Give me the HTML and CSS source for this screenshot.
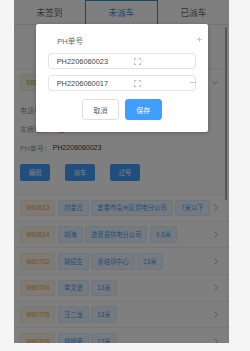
FILE: index.html
```html
<!DOCTYPE html>
<html lang="zh">
<head>
<meta charset="utf-8">
<title>派车</title>
<link rel="stylesheet" href="styles.css">
</head>
<body>
<div class="phone">
  <div class="tabs">
    <div class="tab">未签到</div>
    <div class="tab active">未派车</div>
    <div class="tab">已派车</div>
  </div>

  <div class="filter">
    <div class="search"></div>
  </div>

  <div class="item open">
    <div class="item-head">
      <span class="tag green">S60615</span>
      <svg class="chev-down" width="6" height="4" viewBox="0 0 6 4"><polyline points="0.5,0.5 3,3 5.5,0.5" fill="none" stroke="#999" stroke-width="0.8"/></svg>
    </div>
    <div class="detail">
      <div class="line"><span class="lbl">电话号码：</span><span class="val">13870612345</span></div>
      <div class="line"><span class="lbl">车牌号码：</span><span class="val">赣AF5088</span></div>
      <div class="line"><span class="lbl">PH单号：</span><span class="val">PH2206060023</span></div>
      <div class="actions">
        <button class="act">编辑</button>
        <button class="act">派车</button>
        <button class="act">过号</button>
      </div>
    </div>
  </div>

  <div class="item">
    <span class="tag orange">W60613</span>
    <span class="tag blue">刘金元</span>
    <span class="tag blue">宜春市袁州区供电分公司</span>
    <span class="tag blue">7米以下</span>
    <svg class="chev" width="4" height="7" viewBox="0 0 4 7"><polyline points="0.5,0.5 3.3,3.5 0.5,6.5" fill="none" stroke="#999" stroke-width="0.8"/></svg>
  </div>
  <div class="item">
    <span class="tag orange">W60614</span>
    <span class="tag blue">胡海</span>
    <span class="tag blue">进贤县供电分公司</span>
    <span class="tag blue">9.6米</span>
    <svg class="chev" width="4" height="7" viewBox="0 0 4 7"><polyline points="0.5,0.5 3.3,3.5 0.5,6.5" fill="none" stroke="#999" stroke-width="0.8"/></svg>
  </div>
  <div class="item">
    <span class="tag orange">W60702</span>
    <span class="tag blue">胡绍生</span>
    <span class="tag blue">省培训中心</span>
    <span class="tag blue">13米</span>
    <svg class="chev" width="4" height="7" viewBox="0 0 4 7"><polyline points="0.5,0.5 3.3,3.5 0.5,6.5" fill="none" stroke="#999" stroke-width="0.8"/></svg>
  </div>
  <div class="item">
    <span class="tag orange">W60704</span>
    <span class="tag blue">单文进</span>
    <span class="tag blue">13米</span>
    <svg class="chev" width="4" height="7" viewBox="0 0 4 7"><polyline points="0.5,0.5 3.3,3.5 0.5,6.5" fill="none" stroke="#999" stroke-width="0.8"/></svg>
  </div>
  <div class="item">
    <span class="tag orange">W60705</span>
    <span class="tag blue">汪二龙</span>
    <span class="tag blue">13米</span>
    <svg class="chev" width="4" height="7" viewBox="0 0 4 7"><polyline points="0.5,0.5 3.3,3.5 0.5,6.5" fill="none" stroke="#999" stroke-width="0.8"/></svg>
  </div>
  <div class="item">
    <span class="tag orange">W60706</span>
    <span class="tag blue">胡钢荣</span>
    <span class="tag blue">13米</span>
    <svg class="chev" width="4" height="7" viewBox="0 0 4 7"><polyline points="0.5,0.5 3.3,3.5 0.5,6.5" fill="none" stroke="#999" stroke-width="0.8"/></svg>
  </div>

  <div class="thumb"></div>
  <div class="mask"></div>

  <div class="dialog">
    <div class="dlg-head">
      <span class="dlg-label">PH单号</span>
      <svg class="plus" width="5" height="5" viewBox="0 0 5 5"><path d="M2.5 0V5M0 2.5H5" stroke="#bbb" stroke-width="0.8"/></svg>
    </div>
    <div class="field-row">
      <div class="field">
        <span class="field-text">PH2206060023</span>
        <svg class="scan" width="7" height="7" viewBox="0 0 7 7"><path d="M0.5 2.2V0.5H2.2M4.8 0.5H6.5V2.2M6.5 4.8V6.5H4.8M2.2 6.5H0.5V4.8" fill="none" stroke="#aaa" stroke-width="0.8"/></svg>
      </div>
    </div>
    <div class="field-row">
      <div class="field">
        <span class="field-text">PH2206060017</span>
        <svg class="scan" width="7" height="7" viewBox="0 0 7 7"><path d="M0.5 2.2V0.5H2.2M4.8 0.5H6.5V2.2M6.5 4.8V6.5H4.8M2.2 6.5H0.5V4.8" fill="none" stroke="#aaa" stroke-width="0.8"/></svg>
      </div>
      <span class="minus"></span>
    </div>
    <div class="dlg-btns">
      <button class="btn cancel">取消</button>
      <button class="btn save">保存</button>
    </div>
  </div>
</div>
</body>
</html>
```

FILE: styles.css
```css
* {
  box-sizing: border-box;
  margin: 0;
  padding: 0;
}

html, body {
  background: #f5f5f5;
}

body {
  font-family: "Liberation Sans", "Noto Sans CJK SC", sans-serif;
  color: #333;
}

.phone {
  position: relative;
  width: 215px;
  height: 343px;
  margin-left: 14px;
  background: #fff;
  overflow: hidden;
}

/* tabs */
.tabs {
  display: flex;
  height: 25px;
  border-bottom: 1px solid #e4e4e4;
}

.tab {
  flex: 1;
  display: flex;
  align-items: center;
  justify-content: center;
  font-size: 8.7px;
  color: #666;
}

.tab.active {
  border: 1px solid #2b95d6;
  margin-bottom: -1px;
  color: #2b95d6;
}

/* filter */
.filter {
  height: 44px;
  border-bottom: 1px solid #eee;
  display: flex;
  align-items: center;
  padding: 0 30px;
}

.search {
  flex: 1;
  height: 18px;
  border-radius: 9px;
  background: #f6f6f6;
}

/* list items */
.item {
  height: 26.7px;
  border-bottom: 1px solid #eee;
  display: flex;
  align-items: center;
  gap: 2.5px;
  padding: 0 11.5px 0 6px;
}

.item.open {
  height: auto;
  display: block;
  padding: 0;
}

.item-head {
  height: 27px;
  display: flex;
  align-items: center;
  padding: 0 11px 0 6px;
}

.chev,
.chev-down {
  margin-left: auto;
  flex: none;
}

.tag {
  display: inline-flex;
  align-items: center;
  height: 16.7px;
  padding: 0 5px;
  font-size: 6.3px;
  border: 1px solid;
  border-radius: 2px;
  white-space: nowrap;
  flex: none;
}

.tag.orange {
  background: #fdf6ec;
  border-color: #faecd8;
  color: #e6a23c;
}

.tag.blue {
  background: #ecf5ff;
  border-color: #d9ecff;
  color: #409eff;
}

.tag.green {
  background: #f0f9eb;
  border-color: #e1f3d8;
  color: #67c23a;
}

.detail {
  padding: 4px 6px 13px;
}

.line {
  height: 19px;
  display: flex;
  align-items: center;
  font-size: 7px;
}

.lbl {
  color: #999;
  margin-right: 2px;
}

.val {
  color: #333;
}

.actions {
  display: flex;
  gap: 15px;
  margin-top: 7px;
}

.act {
  width: 30px;
  height: 17px;
  border: none;
  border-radius: 2px;
  background: #409eff;
  color: #fff;
  font-family: inherit;
  font-size: 6.3px;
}

/* scrollbar thumb */
.thumb {
  position: absolute;
  left: 210.5px;
  top: 27px;
  width: 2px;
  height: 173px;
  border-radius: 1px;
  background: #aaa;
}

/* overlay */
.mask {
  position: absolute;
  inset: 0;
  background: rgba(0, 0, 0, 0.5);
}

.dialog {
  position: absolute;
  left: 22px;
  top: 24px;
  width: 172px;
  height: 108px;
  background: #fff;
  border-radius: 2px;
  box-shadow: 0 1px 4px rgba(0, 0, 0, 0.25);
  padding: 8px 12px 0 11.7px;
}

.dlg-head {
  height: 16px;
  display: flex;
  align-items: center;
  justify-content: space-between;
  padding-left: 9.6px;
}

.dlg-label {
  font-size: 7.6px;
  color: #666;
}

.plus {
  margin-right: -6px;
  margin-top: -2px;
}

.field-row {
  position: relative;
  margin-top: 5px;
}

.field-row + .field-row {
  margin-top: 6px;
}

.field {
  height: 16px;
  border: 1px solid #e2e4ea;
  border-radius: 3px;
  display: flex;
  align-items: center;
  padding-left: 8px;
  font-size: 7.4px;
  color: #444;
}

.field-text {
  width: 77.6px;
}

.minus {
  position: absolute;
  right: -0.3px;
  top: 7.3px;
  width: 6px;
  height: 1px;
  background: #c0c4cc;
}

.dlg-btns {
  display: flex;
  justify-content: center;
  gap: 5.7px;
  margin-top: 8.3px;
}

.btn {
  width: 37px;
  height: 21px;
  border-radius: 3px;
  font-family: inherit;
  font-size: 7px;
}

.btn.cancel {
  background: #fff;
  border: 1px solid #dcdfe6;
  color: #606266;
}

.btn.save {
  background: #409eff;
  border: 1px solid #409eff;
  color: #fff;
}
```
